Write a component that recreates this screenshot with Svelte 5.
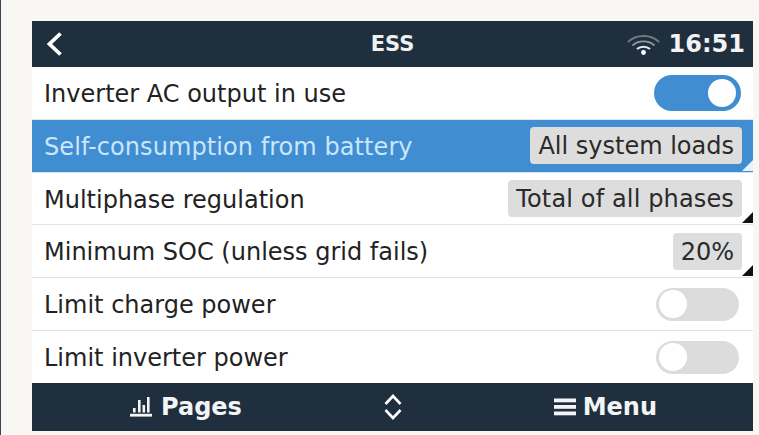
<script>
  const rows = [
    { label: 'Inverter AC output in use', toggle: true, on: true },
    { label: 'Self-consumption from battery', value: 'All system loads', selected: true },
    { label: 'Multiphase regulation', value: 'Total of all phases', wide: true },
    { label: 'Minimum SOC (unless grid fails)', value: '20%' },
    { label: 'Limit charge power', toggle: true, on: false },
    { label: 'Limit inverter power', toggle: true, on: false }
  ];
</script>

<div class="page">
  <div class="screen">
    <header class="head">
      <svg class="back" width="17" height="26" viewBox="0 0 17 26"><path d="M14.500 2.500 3.500 13l11 10.500" fill="none" stroke="#fff" stroke-width="3.800"/></svg>
      <span class="title">ESS</span>
      <div class="status">
        <svg width="33" height="22" viewBox="0 0 33 22" fill="none">
          <path d="M1 9C9 1 24 1 32 9" stroke="#6f7b86" stroke-width="1.800"/>
          <path d="M5.500 12.500C11 7 22 7 27.500 12.500" stroke="#8d98a1" stroke-width="1.800"/>
          <path d="M10 16C13.500 13 19.500 13 23 16" stroke="#e8ebed" stroke-width="2.200"/>
          <circle cx="16.500" cy="19.500" r="2.400" fill="#fff"/>
        </svg>
        <span class="time">16:51</span>
      </div>
    </header>
    <div class="list">
      {#each rows as row}
        <div class="row" class:selected={row.selected}>
          <span class="label">{row.label}</span>
          {#if row.toggle}
            <span class="switch" class:on={row.on}><span class="knob"></span></span>
          {:else}
            <span class="value" class:wide={row.wide}>{row.value}</span>
            <span class="corner"></span>
          {/if}
        </div>
      {/each}
    </div>
    <footer class="foot">
      <div class="tab pages">
        <svg width="22" height="20" viewBox="0 0 22 20" fill="#f2f4f5"><rect y="16.800" width="22" height="2.800"/><rect x="3" y="11" width="2.600" height="4.500"/><rect x="8" y="3" width="2.600" height="12.500"/><rect x="12.500" y="8" width="2.600" height="7.500"/><rect x="17" y="0" width="2.600" height="15.500"/></svg>
        <span>Pages</span>
      </div>
      <svg class="updown" width="20" height="28" viewBox="0 0 20 28" fill="none" stroke="#fff" stroke-width="2.600"><path d="M2.500 11 10 3l7.500 8M2.500 17l7.500 8 7.500-8"/></svg>
      <div class="tab menu">
        <svg width="22" height="18" viewBox="0 0 22 18" fill="#f2f4f5"><rect y="0.500" width="22" height="3.800"/><rect y="7" width="22" height="3.800"/><rect y="13.500" width="22" height="3.800"/></svg>
        <span>Menu</span>
      </div>
    </footer>
  </div>
</div>

<style>
  :global(body) { margin: 0; background: #f8f7f4; }
  .page {
    width: 759px; height: 435px; box-sizing: border-box;
    padding: 21px 6px 4px 31px; overflow: hidden;
    border-left: 1px solid #3a4552;
    font-family: "DejaVu Sans", sans-serif;
  }
  .screen { width: 721px; height: 410px; display: flex; flex-direction: column; background: #fff; }
  .head {
    height: 46px; flex: none; background: #202f3e; color: #fff;
    display: grid; grid-template-columns: 1fr auto 1fr; align-items: center;
    padding: 0 8px;
  }
  .back { display: block; margin-left: 6px; }
  .title { font-size: 21px; font-weight: 700; color: #eef0f1; padding-bottom: 1px; }
  .status { display: flex; justify-content: flex-end; align-items: center; gap: 9px; }
  .time { font-size: 24px; font-weight: 700; color: #f2f3f4; }
  .list { flex: 1; display: flex; flex-direction: column; }
  .row {
    flex: 1; position: relative; display: flex; align-items: center; justify-content: space-between;
    padding: 0 10px 0 12px; border-bottom: 1px solid #e2e2e2; color: #222;
  }
  .row:last-child { border-bottom: 0; }
  .label { font-size: 24px; padding-top: 2px; }
  .selected { background: #418dd2; border-bottom-color: #cfe4f5; }
  .selected .label { color: #c9e6fa; letter-spacing: 0.07px; }
  .value {
    background: #dddddd; border-radius: 4px; padding: 1px 8px 0; height: 36px; line-height: 36px;
    font-size: 24px; color: #2a2a2a; margin-right: 1px;
  }
  .value.wide { letter-spacing: 0.14px; }
  .corner {
    position: absolute; right: 0; bottom: 1px; width: 0; height: 0;
    border-style: solid; border-width: 0 0 11px 11px; border-color: transparent transparent #111 transparent;
  }
  .selected .corner { border-bottom-color: #e8f2fa; }
  .switch {
    width: 83px; height: 33px; border-radius: 17px; background: #dcdcdc;
    display: flex; align-items: center; padding: 0 3px; box-sizing: border-box; margin-right: 4px;
  }
  .switch.on { width: 87px; height: 36px; border-radius: 18px; background: #418dd2; justify-content: flex-end; margin-right: 2px; padding: 0 5px; }
  .knob { width: 28px; height: 28px; border-radius: 50%; background: #fff; }
  .foot {
    height: 48px; flex: none; background: #202f3e; color: #f2f4f5;
    display: grid; grid-template-columns: 1fr 20px 1fr; align-items: center;
    font-size: 24px; font-weight: 700;
  }
  .tab { display: flex; align-items: center; }
  .pages { justify-self: start; margin-left: 98px; gap: 9px; }
  .menu { justify-self: end; margin-right: 96px; gap: 7px; }
  .updown { display: block; }
</style>
